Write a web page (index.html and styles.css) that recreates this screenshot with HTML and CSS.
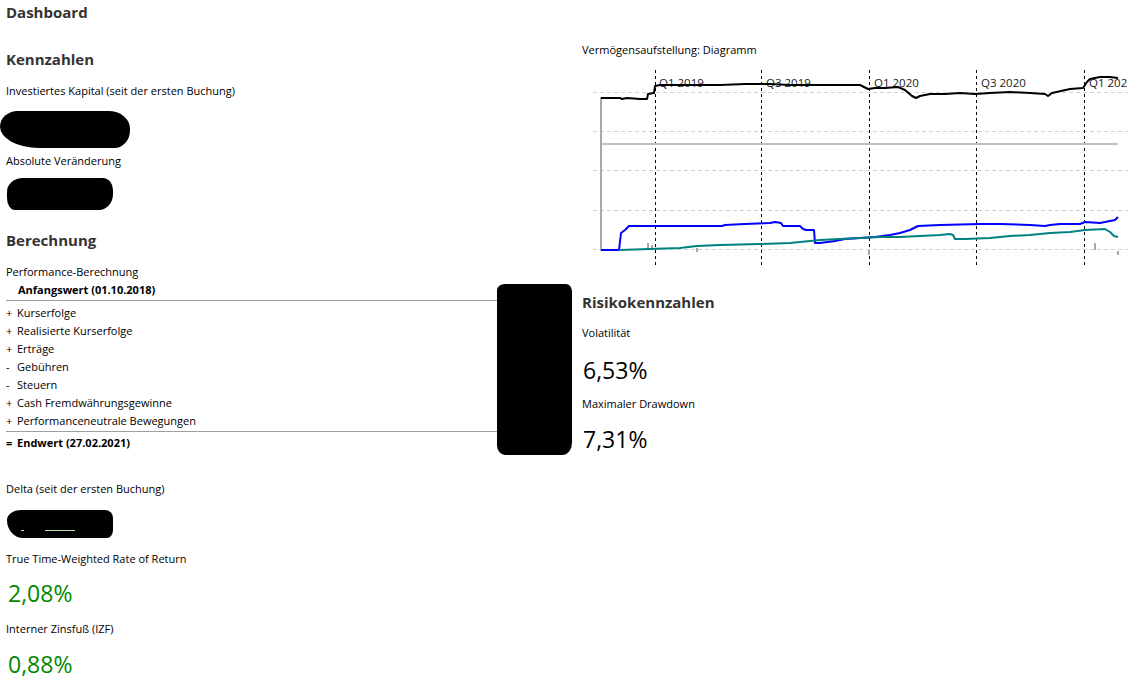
FILE: index.html
```html
<!DOCTYPE html>
<html lang="de">

<head>
  <meta charset="UTF-8">
  <meta name="viewport" content="width=device-width, initial-scale=1.0">
  <title>Dashboard</title>
  <link rel="stylesheet" href="styles.css">
</head>

<body>
  <h1 class="page-title">Dashboard</h1>

  <div class="dashboard">
    <!-- left column: key figures and calculation -->
    <div class="column">
      <h2 class="section kennzahlen">Kennzahlen</h2>
      <div class="label gap-13">Investiertes Kapital (seit der ersten Buchung)</div>
      <div class="redacted redacted-capital"></div>
      <div class="label gap-4">Absolute Veränderung</div>
      <div class="redacted redacted-change"></div>

      <h2 class="section berechnung">Berechnung</h2>
      <div class="label gap-13">Performance-Berechnung</div>

      <div class="calc">
        <div class="calc-rows">
          <div class="calc-row head">Anfangswert (01.10.2018)</div>
          <div class="calc-body">
            <div class="calc-row"><span class="sign">+</span>Kurserfolge</div>
            <div class="calc-row"><span class="sign">+</span>Realisierte Kurserfolge</div>
            <div class="calc-row"><span class="sign">+</span>Erträge</div>
            <div class="calc-row"><span class="sign">-</span>Gebühren</div>
            <div class="calc-row"><span class="sign">-</span>Steuern</div>
            <div class="calc-row"><span class="sign">+</span>Cash Fremdwährungsgewinne</div>
            <div class="calc-row"><span class="sign">+</span>Performanceneutrale Bewegungen</div>
          </div>
          <div class="calc-row total"><span class="sign">=</span>Endwert (27.02.2021)</div>
        </div>
        <div class="redacted redacted-values"></div>
      </div>

      <div class="label gap-25">Delta (seit der ersten Buchung)</div>
      <div class="redacted redacted-delta">
        <span class="speck speck-a"></span>
        <span class="speck speck-b"></span>
      </div>
      <div class="label gap-12">True Time-Weighted Rate of Return</div>
      <div class="value positive gap-10">2,08%</div>
      <div class="label gap-12">Interner Zinsfuß (IZF)</div>
      <div class="value positive gap-11">0,88%</div>
    </div>

    <!-- right column: chart and risk figures -->
    <div class="column">
      <div class="label chart-title">Vermögensaufstellung: Diagramm</div>
      <svg class="chart" viewBox="582 60 560 210" width="560" height="210">
        <g class="grid">
          <line x1="593" y1="92.5" x2="1128" y2="92.5" />
          <line x1="593" y1="131.5" x2="1128" y2="131.5" />
          <line x1="593" y1="170.5" x2="1128" y2="170.5" />
          <line x1="593" y1="210.5" x2="1128" y2="210.5" />
          <line x1="593" y1="249.5" x2="1128" y2="249.5" />
        </g>
        <g class="quarters">
          <line x1="655.5" y1="70" x2="655.5" y2="265" />
          <line x1="761.5" y1="70" x2="761.5" y2="265" />
          <line x1="869.5" y1="70" x2="869.5" y2="265" />
          <line x1="976.5" y1="70" x2="976.5" y2="265" />
          <line x1="1084.5" y1="70" x2="1084.5" y2="265" />
        </g>
        <defs>
          <clipPath id="clip-right">
            <rect x="582" y="60" width="546" height="210" />
          </clipPath>
        </defs>
        <g class="quarter-labels">
          <text x="659" y="87">Q1 2019</text>
          <text x="766" y="87">Q3 2019</text>
          <text x="874" y="87">Q1 2020</text>
          <text x="981" y="87">Q3 2020</text>
          <text x="1089" y="87" clip-path="url(#clip-right)">Q1 2021</text>
        </g>
        <line class="axis" x1="601" y1="97" x2="601" y2="251" />
        <line class="baseline" x1="601" y1="144" x2="1118" y2="144" />
        <g class="ticks">
          <line x1="648" y1="243" x2="648" y2="250" />
          <line x1="652" y1="245" x2="652" y2="250" />
          <line x1="697" y1="248" x2="697" y2="252" />
          <line x1="869" y1="250" x2="869" y2="255" />
          <line x1="1095" y1="243" x2="1095" y2="250" />
          <line x1="1118" y1="251" x2="1118" y2="255" />
        </g>
        <polyline class="series total-value"
          points="601,98 620,98 622,99 627,98 640,99 647,99 648,94 654,93 655,86 660,85 700,85 720,85 745,84 770,84 790,85 848,85 860,85 868,89 875,88 885,88 898,87 905,90 912,96 916,98 920,96 930,94 945,94 960,93 975,94 990,93 1010,92 1030,93 1045,94 1048,96 1052,93 1070,89 1083,88 1087,82 1090,79 1100,77 1110,77 1118,78" />
        <polyline class="series invested"
          points="601,250 619,250 621,233 625,230 629,226 660,226 722,226 725,225 745,224 770,223 775,222 781,223 783,226 800,226 803,229 806,230 814,230 815,243 820,243 835,241 845,239 860,238 875,237 890,235 900,233 910,230 918,226 940,225 980,224 1000,224 1030,225 1045,226 1050,225 1060,224 1080,224 1085,222 1100,223 1110,221 1115,220 1118,217" />
        <polyline class="series delta"
          points="619,250 650,249 680,248 697,246 720,245 760,244 790,243 800,242 820,240 840,239 860,238 880,237 900,237 920,236 940,235 950,234 953,235 955,239 965,239 990,238 1010,236 1030,235 1050,233 1070,232 1085,230 1105,229 1110,232 1114,236 1118,237" />
      </svg>

      <h2 class="section risk">Risikokennzahlen</h2>
      <div class="label gap-12">Volatilität</div>
      <div class="value gap-13">6,53%</div>
      <div class="label gap-10">Maximaler Drawdown</div>
      <div class="value gap-11">7,31%</div>
    </div>
  </div>
</body>

</html>
```

FILE: styles.css
```css
body {
  font-family: 'Open Sans', 'Noto Sans', sans-serif;
  font-size: 11px;
  margin: 0;
  padding: 0 0 0 6px;
  color: #000;
  background: #fff;
}

.page-title {
  font-size: 15px;
  font-weight: bold;
  line-height: 20px;
  color: #333;
  margin: 2px 0 0 0;
}

.dashboard {
  display: grid;
  grid-template-columns: 566px 1fr;
  column-gap: 10px;
  align-items: start;
}

.column {
  display: flex;
  flex-direction: column;
  align-items: flex-start;
}

.section {
  font-size: 15px;
  font-weight: bold;
  line-height: 20px;
  color: #333;
  margin: 0;
}

.kennzahlen {
  margin-top: 27px;
}

.berechnung {
  margin-top: 20px;
}

.risk {
  margin-top: 22px;
}

.label {
  line-height: 18px;
  white-space: nowrap;
}

.chart-title {
  margin-top: 19px;
}

.gap-4 { margin-top: 4px; }
.gap-10 { margin-top: 10px; }
.gap-11 { margin-top: 11px; }
.gap-12 { margin-top: 12px; }
.gap-13 { margin-top: 13px; }
.gap-25 { margin-top: 25px; }

.value {
  font-size: 23px;
  line-height: 30px;
  padding-left: 1px;
}

.positive {
  color: #008800;
  padding-left: 2px;
}

/* blacked-out amounts */
.redacted {
  background: #000;
}

.redacted-capital {
  width: 130px;
  height: 37px;
  margin: 11px 0 0 -6px;
  border-radius: 18px 22px 16px 40px / 16px 18px 18px 22px;
}

.redacted-change {
  width: 106px;
  height: 32px;
  margin-top: 8px;
  margin-left: 1px;
  border-radius: 16px 10px 14px 8px / 14px 12px 16px 12px;
}

.redacted-delta {
  position: relative;
  width: 106px;
  height: 28px;
  margin-top: 12px;
  margin-left: 1px;
  border-radius: 14px 8px 6px 16px / 10px 8px 8px 18px;
}

.speck {
  position: absolute;
  height: 1px;
  background: #b9dca0;
}

.speck-a {
  left: 14px;
  top: 20px;
  width: 3px;
}

.speck-b {
  left: 38px;
  top: 20px;
  width: 30px;
}

.redacted-values {
  flex: none;
  width: 75px;
  height: 171px;
  margin-top: 3px;
  border-radius: 8px 6px 10px 8px / 6px 8px 12px 10px;
}

/* performance calculation table */
.calc {
  display: flex;
  width: 566px;
}

.calc-rows {
  width: 491px;
}

.calc-row {
  line-height: 18px;
  white-space: nowrap;
}

.calc-row.head {
  font-weight: bold;
  padding-left: 12px;
  padding-bottom: 1px;
  border-bottom: 1px solid #a0a0a0;
}

.calc-body {
  padding-top: 3px;
  padding-bottom: 1px;
  border-bottom: 1px solid #a0a0a0;
}

.calc-row.total {
  font-weight: bold;
  margin-top: 2px;
}

.sign {
  display: inline-block;
  width: 11px;
}

/* chart */
.chart {
  display: block;
  margin-top: 1px;
}

.grid line {
  stroke: #d0d0d0;
  stroke-width: 1;
  stroke-dasharray: 4 3;
}

.quarters line {
  stroke: #000;
  stroke-width: 1;
  stroke-dasharray: 3 3;
}

.quarter-labels text {
  font-family: 'Open Sans', 'Noto Sans', sans-serif;
  font-size: 11.5px;
  fill: #1a1a1a;
}

.axis {
  stroke: #a8a8a8;
  stroke-width: 2;
}

.baseline {
  stroke: #c0c0c0;
  stroke-width: 2;
}

.ticks line {
  stroke: #a8a8a8;
  stroke-width: 2;
}

.series {
  fill: none;
  stroke-width: 2;
  stroke-linejoin: round;
}

.total-value {
  stroke: #000;
}

.invested {
  stroke: #0000ff;
}

.delta {
  stroke: #008080;
}
```
